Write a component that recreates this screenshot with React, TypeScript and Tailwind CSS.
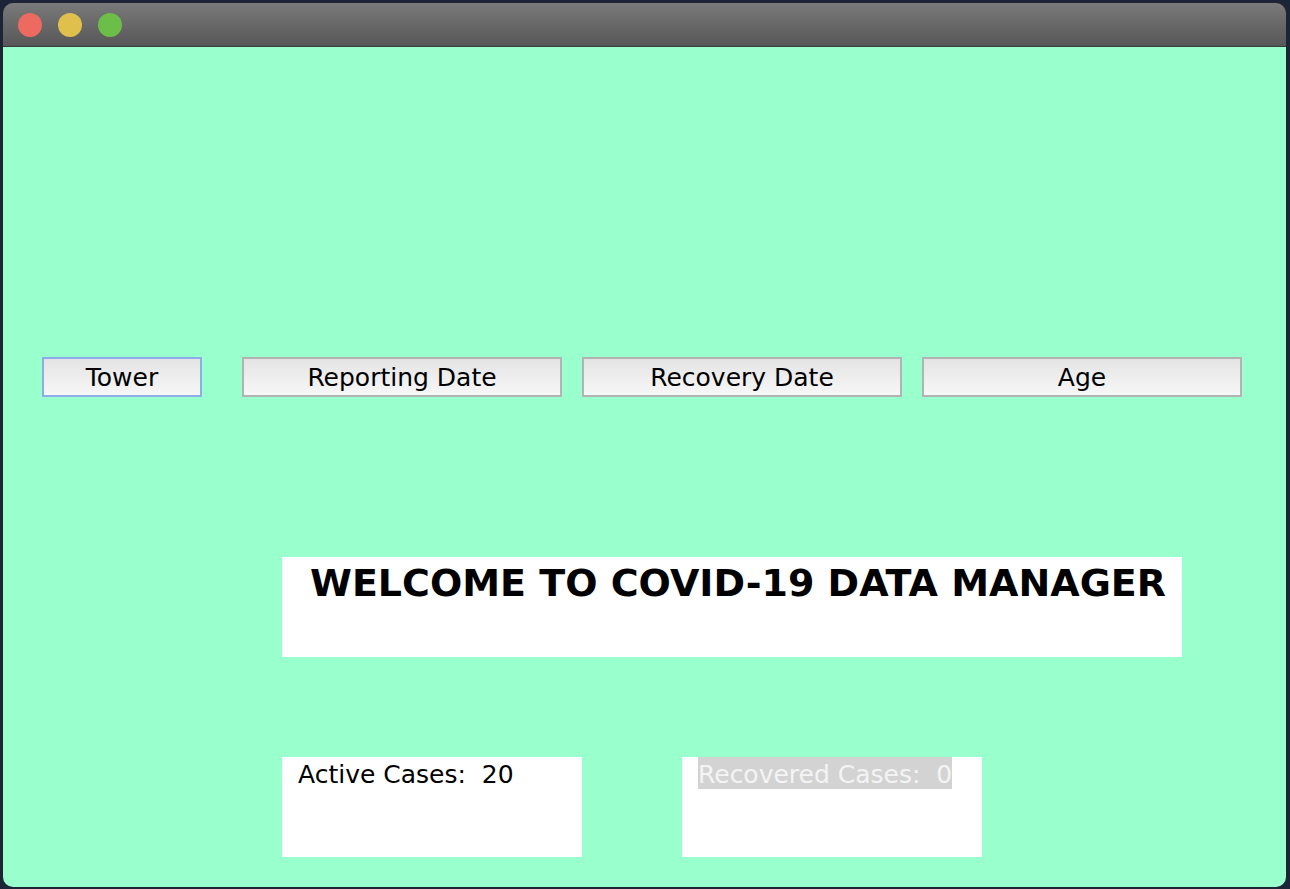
import React from "react";

const buttons = [
  { label: "Tower", width: "w-[160px]", focused: true },
  { label: "Reporting Date", width: "w-[320px]", focused: false },
  { label: "Recovery Date", width: "w-[320px]", focused: false },
  { label: "Age", width: "w-[320px]", focused: false },
];

const App = () => {
  return (
    <div className="w-[1290px] h-[889px] bg-[#1c2538] p-[3px] font-['DejaVu_Sans',sans-serif]">
      <div className="w-[1283px] h-[884px] rounded-[10px] overflow-hidden flex flex-col">
        {/* title bar */}
        <div className="h-[44px] bg-gradient-to-b from-[#7a7a7a] to-[#575757] border-b border-[#3a3a3a] flex items-center gap-[16px] pl-[15px]">
          <span className="w-[24px] h-[24px] rounded-full bg-[#ec6a5f]" />
          <span className="w-[24px] h-[24px] rounded-full bg-[#e0c04d]" />
          <span className="w-[24px] h-[24px] rounded-full bg-[#6cbe48]" />
        </div>

        {/* content */}
        <div className="flex-1 bg-[#99ffcc] flex flex-col">
          <div className="flex pt-[310px] pl-[39px]">
            {buttons.map((b, i) => (
              <button
                key={b.label}
                className={`${b.width} h-[40px] border-2 bg-gradient-to-b from-[#e4e4e4] to-[#f7f7f7] text-[25px] text-black leading-none flex items-center justify-center ${
                  b.focused ? "border-[#8eacea]" : "border-[#b3b3b3]"
                } ${i === 0 ? "" : i === 1 ? "ml-[40px]" : "ml-[20px]"}`}
              >
                {b.label}
              </button>
            ))}
          </div>

          <div className="ml-[279px] mt-[160px] w-[900px] h-[100px] bg-white pl-[28px]">
            <p className="text-[38px] font-bold text-black leading-[52px] whitespace-nowrap">
              WELCOME TO COVID-19 DATA MANAGER
            </p>
          </div>

          <div className="flex ml-[279px] mt-[100px]">
            <div className="w-[300px] h-[100px] bg-white pl-[16px]">
              <p className="pt-[3px] text-[25px] leading-[29px] text-black whitespace-pre">
                Active Cases:  20
              </p>
            </div>
            <div className="ml-[100px] w-[300px] h-[100px] bg-white pl-[16px]">
              <p className="inline-block bg-[#d3d3d3] pt-[3px] text-[25px] leading-[29px] text-[#f4f4f4] whitespace-pre">
                Recovered Cases:  0
              </p>
            </div>
          </div>
        </div>
      </div>
    </div>
  );
};

export default App;
